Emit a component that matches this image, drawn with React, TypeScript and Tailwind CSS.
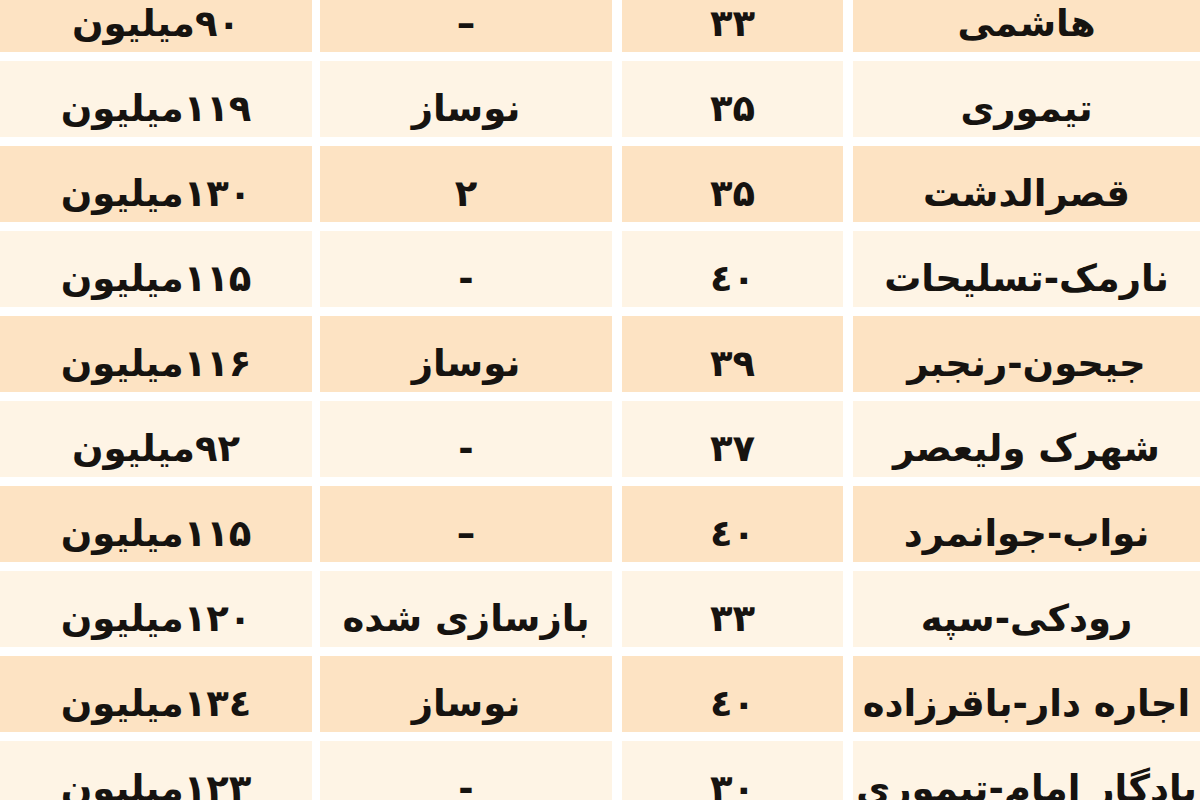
const rows = [
  { name: "هاشمی", size: "۳۳", state: "–", price: "۹۰میلیون" },
  { name: "تیموری", size: "۳۵", state: "نوساز", price: "۱۱۹میلیون" },
  { name: "قصرالدشت", size: "۳۵", state: "۲", price: "۱۳۰میلیون" },
  { name: "نارمک-تسلیحات", size: "٤٠", state: "-", price: "۱۱۵میلیون" },
  { name: "جیحون-رنجبر", size: "۳۹", state: "نوساز", price: "۱۱۶میلیون" },
  { name: "شهرک ولیعصر", size: "۳۷", state: "-", price: "۹۲میلیون" },
  { name: "نواب-جوانمرد", size: "٤٠", state: "–", price: "۱۱۵میلیون" },
  { name: "رودکی-سپه", size: "۳۳", state: "بازسازی شده", price: "۱۲۰میلیون" },
  { name: "اجاره دار-باقرزاده", size: "٤٠", state: "نوساز", price: "۱۳٤میلیون" },
  { name: "یادگار امام-تیموری", size: "۳۰", state: "-", price: "۱۲۳میلیون" },
]

function Cell({ text, className }: { text: string; className: string }) {
  return (
    <div className={`flex h-full items-center justify-center pt-[18px] ${className}`}>
      <span className="leading-none">{text}</span>
    </div>
  )
}

export default function App() {
  return (
    <div className="h-[800px] w-[1200px] overflow-hidden bg-white">
      <div
        dir="rtl"
        className="-mt-6 flex flex-col gap-[9px] text-[37px] font-bold text-[#161310] [font-family:'DejaVu_Sans',sans-serif]"
      >
        {rows.map((r, i) => {
          const bg = i % 2 === 0 ? "bg-[#fde3c3]" : "bg-[#fef4e5]"
          return (
            <div key={i} className="flex h-[76px] shrink-0">
              <Cell text={r.name} className={`w-[347px] ${bg}`} />
              <div className="w-[10px]" />
              <Cell text={r.size} className={`w-[221px] ${bg}`} />
              <div className="w-[10px]" />
              <Cell text={r.state} className={`w-[292px] ${bg}`} />
              <div className="w-[8px]" />
              <Cell text={r.price} className={`w-[312px] ${bg}`} />
            </div>
          )
        })}
      </div>
    </div>
  )
}
